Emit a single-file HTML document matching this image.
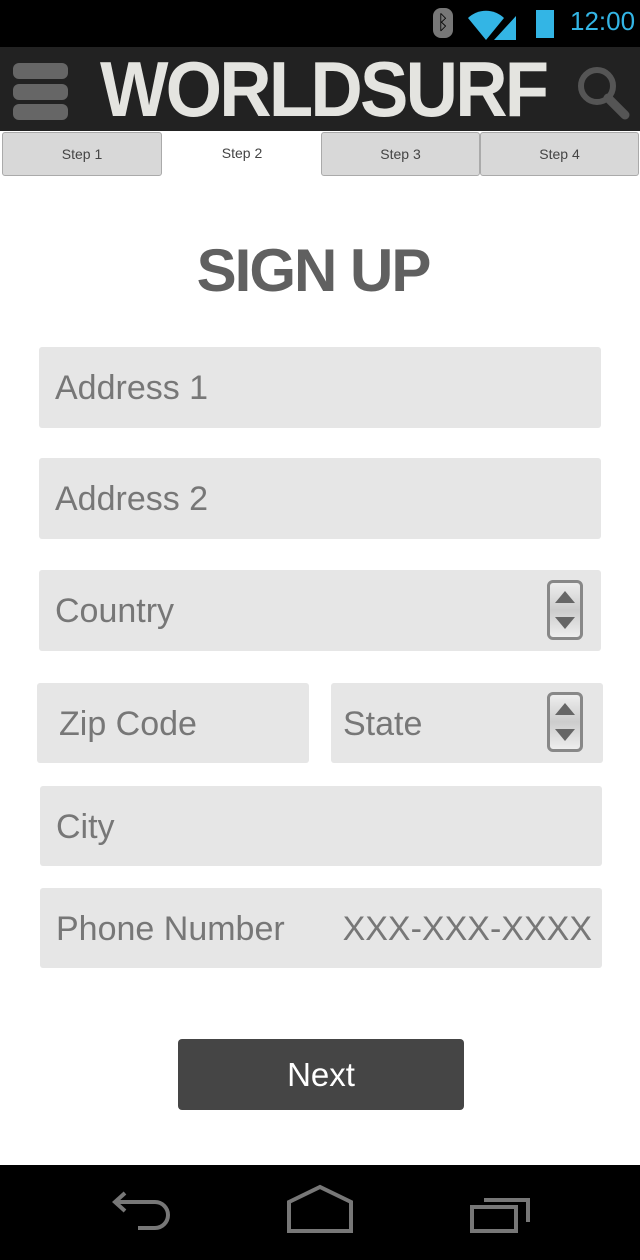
<!DOCTYPE html>
<html><head><style>
*{margin:0;padding:0;box-sizing:border-box}
body{width:640px;height:1260px;background:#fff;position:relative;overflow:hidden;font-family:"Liberation Sans",sans-serif}
.abs{position:absolute}
.f{position:absolute;background:#e6e6e6;border-radius:3px;color:#777;font-size:34px;line-height:82px;padding-left:16px}
.tab{position:absolute;top:132px;height:44px;background:#d8d8d8;border:1px solid #aaa;border-radius:3px;font-size:14px;color:#444;text-align:center;line-height:42px}
.spin{position:absolute;width:36px;height:60px;border:3px solid #888;border-radius:6px;background:linear-gradient(#eee,#ccc 50%,#eee)}
</style></head><body>
<div class="abs" style="left:0;top:0;width:640px;height:47px;background:#000"></div>
<div class="abs" style="left:433px;top:8px;width:20px;height:30px;background:#777;border-radius:8px;color:#000;font-size:20px;text-align:center;line-height:30px">ᛒ</div>
<svg class="abs" style="left:466px;top:8px" width="62" height="32"><path d="M2 10 A26 26 0 0 1 38 10 L20 32 Z" fill="#33b5e5"/><path d="M28 32 L50 8 L50 32 Z" fill="#33b5e5"/></svg>
<div class="abs" style="left:536px;top:10px;width:18px;height:28px;background:#33b5e5"></div>
<div class="abs" style="left:570px;top:6px;font-size:26px;color:#33b5e5">12:00</div>
<div class="abs" style="left:0;top:47px;width:640px;height:84px;background:#222"></div>
<div class="abs" style="left:13px;top:63px;width:55px;height:16px;background:#666;border-radius:6px"></div>
<div class="abs" style="left:13px;top:84px;width:55px;height:16px;background:#666;border-radius:6px"></div>
<div class="abs" style="left:13px;top:104px;width:55px;height:16px;background:#666;border-radius:6px"></div>
<div class="abs" style="left:100px;top:44px;font-size:78px;font-weight:bold;color:#e4e4e0;letter-spacing:-3px;white-space:nowrap;transform:scaleX(0.93);transform-origin:left">WORLDSURF</div>
<svg class="abs" style="left:575px;top:62px" width="55" height="60"><circle cx="22" cy="24" r="16" fill="none" stroke="#555" stroke-width="6"/><path d="M33 36 L50 53" stroke="#555" stroke-width="9" stroke-linecap="round"/></svg>
<div class="tab" style="left:2px;width:160px">Step 1</div>
<div class="abs" style="left:163px;top:132px;width:158px;height:44px;font-size:14px;color:#444;text-align:center;line-height:42px">Step 2</div>
<div class="tab" style="left:321px;width:159px">Step 3</div>
<div class="tab" style="left:480px;width:159px">Step 4</div>
<div class="abs" style="left:0;top:236px;width:626px;text-align:center;font-size:60px;font-weight:bold;color:#606060;letter-spacing:-2px">SIGN UP</div>
<div class="f" style="left:39px;top:347px;width:562px;height:81px">Address 1</div>
<div class="f" style="left:39px;top:458px;width:562px;height:81px">Address 2</div>
<div class="f" style="left:39px;top:570px;width:562px;height:81px">Country</div>
<div class="spin" style="left:547px;top:580px"></div>
<div class="f" style="left:37px;top:683px;width:272px;height:80px;padding-left:22px">Zip Code</div>
<div class="f" style="left:331px;top:683px;width:272px;height:80px;padding-left:12px">State</div>
<div class="spin" style="left:547px;top:692px"></div>
<div class="f" style="left:40px;top:786px;width:562px;height:80px">City</div>
<div class="f" style="left:40px;top:888px;width:562px;height:80px">Phone Number<span style="position:absolute;right:10px">XXX-XXX-XXXX</span></div>
<svg class="abs" style="left:550px;top:583px" width="32" height="56"><path d="M5 20 L15 8 L25 20Z M5 34 L15 46 L25 34Z" fill="#666"/></svg>
<svg class="abs" style="left:550px;top:695px" width="32" height="56"><path d="M5 20 L15 8 L25 20Z M5 34 L15 46 L25 34Z" fill="#666"/></svg>
<div class="abs" style="left:178px;top:1039px;width:286px;height:71px;background:#454545;border-radius:4px;color:#fff;font-size:33px;text-align:center;line-height:71px">Next</div>
<div class="abs" style="left:0;top:1165px;width:640px;height:95px;background:#000"></div>
<svg class="abs" style="left:0;top:1165px" width="640" height="95"><g fill="none" stroke="#777" stroke-width="4"><path d="M125 28 L115 37 L125 46 M115 37 H155 A13 13 0 0 1 155 63 H138"/><path d="M289 37 L320 22 L351 37 V66 H289 Z"/><path d="M472 42 H516 V66 H472 Z M484 35 H528 V57"/></g></svg>
</body></html>
